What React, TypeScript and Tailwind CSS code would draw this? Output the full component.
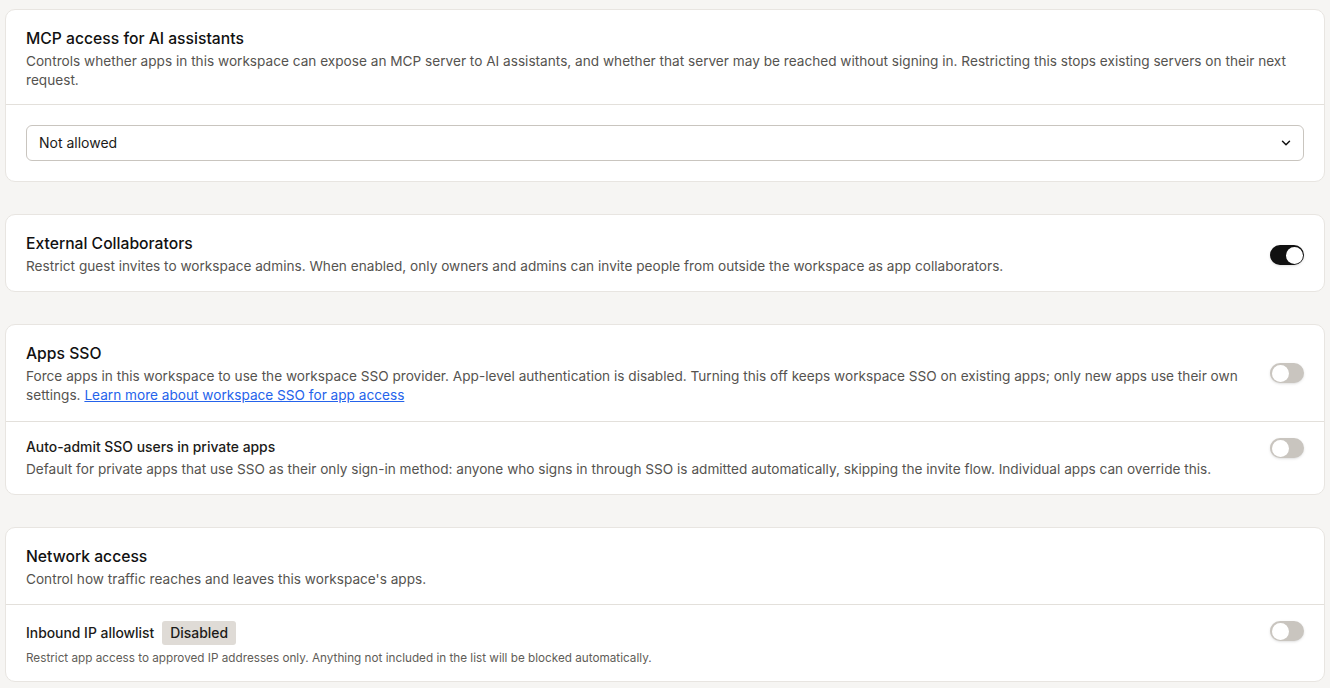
import { ChevronDown } from 'lucide-react'
import type { ReactNode } from 'react'

function Toggle({ on = false }: { on?: boolean }) {
  return (
    <div
      className={`flex h-5 w-[34px] shrink-0 items-center rounded-full p-[1.5px] shadow-sm ${
        on ? 'justify-end bg-[#111111]' : 'justify-start bg-[#c9c5bf]'
      }`}
    >
      <div className="h-[17px] w-[17px] rounded-full bg-white" />
    </div>
  )
}

function Card({ children }: { children: ReactNode }) {
  return <section className="rounded-[10px] border border-[#e8e5e1] bg-white">{children}</section>
}

function Title({ children }: { children: ReactNode }) {
  return <h2 className="text-[15.7px] leading-[20px] font-medium text-[#111111]">{children}</h2>
}

function Desc({ children }: { children: ReactNode }) {
  return <p className="text-[13.63px] leading-[19px] text-[#55534f]">{children}</p>
}

export default function App() {
  return (
    <div className="flex h-[688px] flex-col gap-[32px] overflow-hidden bg-[#f6f5f3] px-[5px] pt-[9px] font-['Inter',sans-serif]">
      {/* MCP access */}
      <Card>
        <div className="border-b border-[#e3e0db] px-5 pt-[19px] pb-[14px]">
          <Title>MCP access for AI assistants</Title>
          <div className="mt-[3px]">
            <Desc>
              Controls whether apps in this workspace can expose an MCP server to AI assistants, and whether that
              server may be reached without signing in. Restricting this stops existing servers on their next request.
            </Desc>
          </div>
        </div>
        <div className="p-5">
          <div className="flex h-9 items-center justify-between rounded-md border border-[#c9c5bf] bg-white pr-[10px] pl-3 text-[14px] text-[#1c1b19]">
            <span className="leading-[20px]">Not allowed</span>
            <ChevronDown className="h-3.5 w-3.5 text-[#111111]" strokeWidth={2.5} />
          </div>
        </div>
      </Card>

      {/* External collaborators */}
      <Card>
        <div className="flex items-center justify-between gap-6 px-5 pt-[19px] pb-[15px]">
          <div>
            <Title>External Collaborators</Title>
            <div className="mt-[3px]">
              <Desc>
                Restrict guest invites to workspace admins. When enabled, only owners and admins can invite people from
                outside the workspace as app collaborators.
              </Desc>
            </div>
          </div>
          <Toggle on />
        </div>
      </Card>

      {/* Apps SSO */}
      <Card>
        <div className="flex items-start justify-between gap-6 border-b border-[#e3e0db] px-5 pt-[19px] pb-[16px]">
          <div>
            <Title>Apps SSO</Title>
            <div className="mt-[3px]">
              <Desc>
                Force apps in this workspace to use the workspace SSO provider. App-level authentication is disabled.
                Turning this off keeps workspace SSO on existing apps; only new apps use their own settings.{' '}
                <a className="text-[#2563eb] underline" href="#">
                  Learn more about workspace SSO for app access
                </a>
              </Desc>
            </div>
          </div>
          <div className="mt-[19px]">
            <Toggle />
          </div>
        </div>
        <div className="flex items-start justify-between gap-6 px-5 pt-4 pb-[15px]">
          <div>
            <div className="text-[13.9px] leading-[19px] font-[450] text-[#1c1b19]">Auto-admit SSO users in private apps</div>
            <div className="mt-[3px]">
              <Desc>
                Default for private apps that use SSO as their only sign-in method: anyone who signs in through SSO is
                admitted automatically, skipping the invite flow. Individual apps can override this.
              </Desc>
            </div>
          </div>
          <Toggle />
        </div>
      </Card>

      {/* Network access */}
      <Card>
        <div className="border-b border-[#e3e0db] px-5 pt-[19px] pb-[15px]">
          <Title>Network access</Title>
          <div className="mt-[3px]">
            <Desc>Control how traffic reaches and leaves this workspace's apps.</Desc>
          </div>
        </div>
        <div className="flex items-start justify-between gap-6 px-5 pt-4 pb-[15px]">
          <div>
            <div className="flex items-center gap-2">
              <span className="text-[13.9px] font-[450] text-[#1c1b19]">Inbound IP allowlist</span>
              <span className="rounded-[3px] bg-[#dfdbd6] px-2 py-[2px] text-[13.9px] leading-[20px] font-[450] text-[#1c1b19]">
                Disabled
              </span>
            </div>
            <p className="mt-[5px] text-[11.73px] leading-[16px] text-[#5f5d58]">
              Restrict app access to approved IP addresses only. Anything not included in the list will be blocked
              automatically.
            </p>
          </div>
          <Toggle />
        </div>
      </Card>
    </div>
  )
}
